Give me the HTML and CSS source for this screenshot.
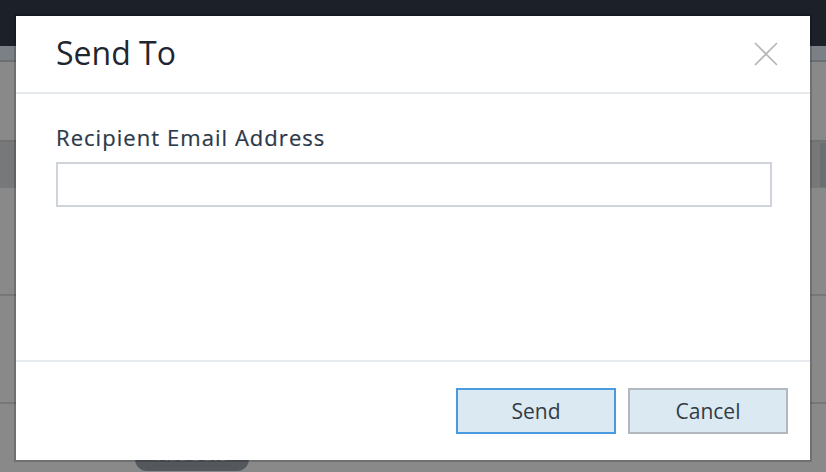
FILE: index.html
```html
<!DOCTYPE html>
<html>
<head>
<meta charset="utf-8">
<link rel="stylesheet" href="styles.css">
</head>
<body>
<div class="page">
  <div class="topbar"></div>
  <div class="subbar"></div>
  <div class="band band-a"></div>
  <div class="band band-b"><div class="band-b-side"></div></div>
  <div class="band band-c"></div>
  <div class="band band-d"></div>
  <div class="band band-e"><div class="pill">Add Date</div></div>
</div>

<div class="modal" role="dialog">
  <div class="modal-header">
    <h2 class="modal-title">Send To</h2>
    <button class="close" aria-label="Close">
      <svg width="24" height="24" viewBox="0 0 24 24"><path d="M1 1 L23 23 M23 1 L1 23" stroke="#b3b5b8" stroke-width="1.6" fill="none"/></svg>
    </button>
  </div>
  <div class="modal-body">
    <label class="label" for="email">Recipient Email Address</label>
    <input class="input" id="email" type="text">
  </div>
  <div class="modal-footer">
    <button class="btn btn-primary">Send</button>
    <button class="btn">Cancel</button>
  </div>
</div>
</body>
</html>
```

FILE: styles.css
```css
html, body {
  margin: 0;
  padding: 0;
}
body {
  width: 826px;
  height: 472px;
  overflow: hidden;
  background: #898989;
  font-family: "Open Sans", "Noto Sans", sans-serif;
  position: relative;
}
.page {
  display: flex;
  flex-direction: column;
  height: 472px;
}
.topbar {
  height: 46px;
  background: #1b2029;
}
.subbar {
  height: 14px;
  background: #7b8087;
  border-bottom: 2px solid #6c6f72;
}
.band {
  background: #898989;
}
.band-a {
  height: 78px;
  border-bottom: 2px solid #727272;
}
.band-b {
  height: 46px;
  background: #777879;
  display: flex;
  justify-content: flex-end;
  align-items: center;
}
.band-b-side {
  width: 6px;
  height: 44px;
  background: #6b6f70;
}
.band-c {
  height: 106px;
  border-bottom: 2px solid #777;
}
.band-d {
  height: 106px;
  border-bottom: 2px solid #777;
}
.band-e {
  flex: 1;
  display: flex;
  align-items: flex-end;
  padding-left: 135px;
}
.pill {
  width: 114px;
  height: 30px;
  box-sizing: border-box;
  margin-bottom: 1px;
  padding-top: 4px;
  border-radius: 12px;
  background: #54585d;
  color: #7c8085;
  font-size: 16px;
  text-align: center;
  line-height: 20px;
}

.modal {
  position: absolute;
  left: 16px;
  top: 16px;
  width: 794px;
  height: 444px;
  background: #fff;
  box-shadow: 0 0 0 2px rgba(0, 0, 0, 0.18);
  display: flex;
  flex-direction: column;
}
.modal-header {
  height: 76px;
  border-bottom: 2px solid #e6eaee;
  display: flex;
  align-items: center;
  justify-content: space-between;
  padding: 0 32px 0 40px;
}
.modal-title {
  margin: 0;
  font-size: 32px;
  font-weight: 400;
  color: #1f2630;
  line-height: 40px;
  position: relative;
  top: -1px;
}
.close {
  border: 0;
  background: none;
  padding: 0;
  width: 24px;
  height: 24px;
  display: flex;
}
.modal-body {
  flex: 1;
  padding: 28px 38px 0 40px;
  display: flex;
  flex-direction: column;
  border-bottom: 2px solid #e6eaee;
}
.label {
  font-size: 22px;
  font-weight: 500;
  line-height: 30px;
  color: #2b384a;
  letter-spacing: 1.05px;
  -webkit-text-stroke: 0.2px #2b384a;
}
.input {
  margin-top: 10px;
  height: 45px;
  box-sizing: border-box;
  width: 716px;
  border: 2px solid #cfd4da;
  background: #fff;
  outline: none;
  font-family: inherit;
  font-size: 18px;
  padding: 0 10px;
}
.modal-footer {
  height: 98px;
  box-sizing: border-box;
  padding: 26px 22px 26px 0;
  display: flex;
  justify-content: flex-end;
  gap: 12px;
}
.btn {
  width: 160px;
  height: 46px;
  box-sizing: border-box;
  background: #dbe9f2;
  border: 2px solid #b2b8be;
  color: #333b45;
  font-family: "Open Sans", "Noto Sans", sans-serif;
  font-size: 21px;
  padding: 0;
}
.btn-primary {
  border-color: #4a9ae0;
}
```
